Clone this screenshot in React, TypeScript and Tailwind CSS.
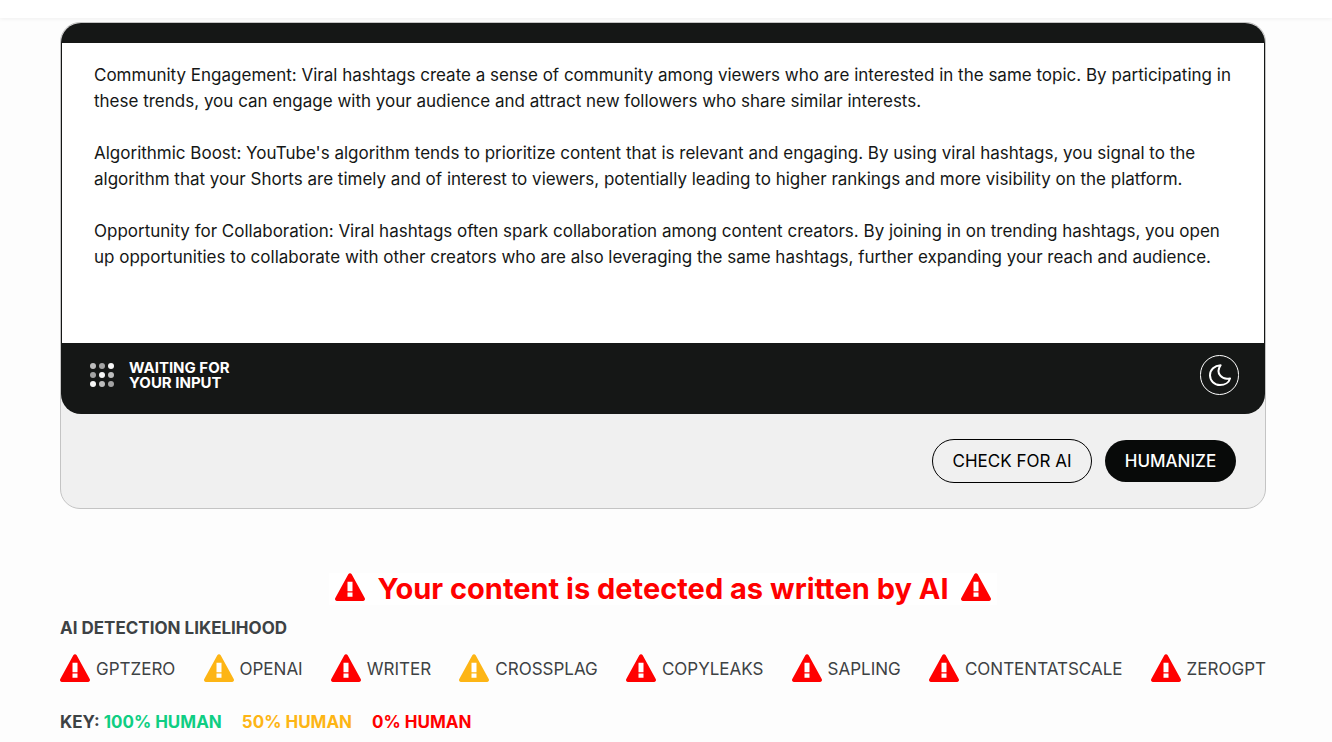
import React from "react";

const content = `Community Engagement: Viral hashtags create a sense of community among viewers who are interested in the same topic. By participating in these trends, you can engage with your audience and attract new followers who share similar interests.

Algorithmic Boost: YouTube's algorithm tends to prioritize content that is relevant and engaging. By using viral hashtags, you signal to the algorithm that your Shorts are timely and of interest to viewers, potentially leading to higher rankings and more visibility on the platform.

Opportunity for Collaboration: Viral hashtags often spark collaboration among content creators. By joining in on trending hashtags, you open up opportunities to collaborate with other creators who are also leveraging the same hashtags, further expanding your reach and audience.`;

const detectors = [
  { name: "GPTZERO", color: "text-[#ff0000]" },
  { name: "OPENAI", color: "text-[#fdb515]" },
  { name: "WRITER", color: "text-[#ff0000]" },
  { name: "CROSSPLAG", color: "text-[#fdb515]" },
  { name: "COPYLEAKS", color: "text-[#ff0000]" },
  { name: "SAPLING", color: "text-[#ff0000]" },
  { name: "CONTENTATSCALE", color: "text-[#ff0000]" },
  { name: "ZEROGPT", color: "text-[#ff0000]" },
];

const dots = [
  ["#bdbdbd", "#a3a3a3", "#f7f7f7"],
  ["#a3a3a3", "#f7f7f7", "#bdbdbd"],
  ["#f7f7f7", "#bdbdbd", "#a3a3a3"],
];

const Warning = ({ className }: { className: string }) => (
  <svg
    className={"h-7 w-[30px] shrink-0 " + className}
    viewBox="0 0 30 28"
    aria-hidden="true"
  >
    <path
      fill="currentColor"
      d="M13.3 1.2a2 2 0 0 1 3.4 0l13 23.8a2 2 0 0 1-1.7 3H2a2 2 0 0 1-1.7-3z"
    />
    <path fill="#fff" d="M12.5 8.7h5v9.6h-5zM12.5 19.5h5v4.3h-5z" />
  </svg>
);

const Moon = () => (
  <svg className="h-[22px] w-[22px]" viewBox="0 0 22 22" aria-hidden="true">
    <path
      fill="none"
      stroke="currentColor"
      strokeWidth="2"
      strokeLinejoin="round"
      d="M11.6 1.2C5.5 1.6 1 5.8 1 11.2C1 16.8 5.4 21 11 21C15.8 21 20 18.4 21 14.4C13.5 16.4 5.8 9.6 11.6 1.2z"
    />
  </svg>
);

const App = () => {
  const [text, setText] = React.useState(content);
  return (
    <div className="min-h-screen bg-[#fdfdfd] font-['Inter','Liberation_Sans',sans-serif] text-[#3d4244]">
      <header className="h-[18px] bg-white shadow-[0_1px_4px_rgba(0,0,0,0.06)]" />
      <main className="pt-1 pl-[60px] pr-[66px]">
        <section className="rounded-[20px] border border-[#c4c4c4] bg-[#f0f0f0]">
          <div className="overflow-hidden rounded-[20px] bg-[#151716] pt-5">
            <textarea
              className="block h-[300px] w-full resize-none border-x border-[#151716] bg-white pt-[19px] pr-6 pl-8 text-[17px] leading-[26px] text-[#151716] outline-none"
              aria-label="Your content"
              value={text}
              onChange={(e) => setText(e.target.value)}
            />
            <div className="flex h-[71px] items-center justify-between pr-[26px] pb-[7px] pl-[29px]">
              <div className="flex items-center gap-[15px]">
                <svg className="h-6 w-6" viewBox="0 0 24 24" aria-hidden="true">
                  {dots.map((row, y) =>
                    row.map((fill, x) => (
                      <circle
                        key={x + "-" + y}
                        cx={3 + x * 9}
                        cy={3 + y * 9}
                        r="3"
                        fill={fill}
                      />
                    ))
                  )}
                </svg>
                <p className="text-[15px] leading-[15px] font-bold text-white">
                  WAITING FOR
                  <br />
                  YOUR INPUT
                </p>
              </div>
              <button
                type="button"
                aria-label="Dark mode"
                className="flex h-10 w-[39px] items-center justify-center rounded-full border border-white text-white"
              >
                <Moon />
              </button>
            </div>
          </div>
          <div className="flex items-center justify-end gap-[13px] pt-[25px] pr-[29px] pb-[25px] text-[17px]">
            <button
              type="button"
              className="h-11 w-40 rounded-full border border-black pt-0.5 text-black"
            >
              CHECK FOR AI
            </button>
            <button
              type="button"
              className="h-[42px] w-[131px] rounded-full bg-[#080a09] pt-0.5 font-medium text-white"
            >
              HUMANIZE
            </button>
          </div>
        </section>

        <h1 className="mx-auto mt-16 flex w-fit items-start justify-center gap-3 bg-white px-[6px] text-[29px] leading-8 font-bold text-[#ff0000]">
          <Warning className="text-[#ff0000]" />
          Your content is detected as written by AI
          <Warning className="text-[#ff0000]" />
        </h1>
        <h2 className="mt-[11px] text-[17px] leading-6 font-bold">
          AI DETECTION LIKELIHOOD
        </h2>
        <ul className="mt-[14px] flex justify-between text-[17px] leading-[30px]">
          {detectors.map((d) => (
            <li key={d.name} className="flex items-start gap-[6px]">
              <Warning className={d.color} />
              {d.name}
            </li>
          ))}
        </ul>
        <p className="mt-[26px] flex gap-5 text-[17px] leading-6 font-bold">
          <span>
            KEY: <span className="text-[#0fce83]">100% HUMAN</span>
          </span>
          <span className="text-[#fdb515]">50% HUMAN</span>
          <span className="text-[#ff0000]">0% HUMAN</span>
        </p>
      </main>
    </div>
  );
};

export default App;
